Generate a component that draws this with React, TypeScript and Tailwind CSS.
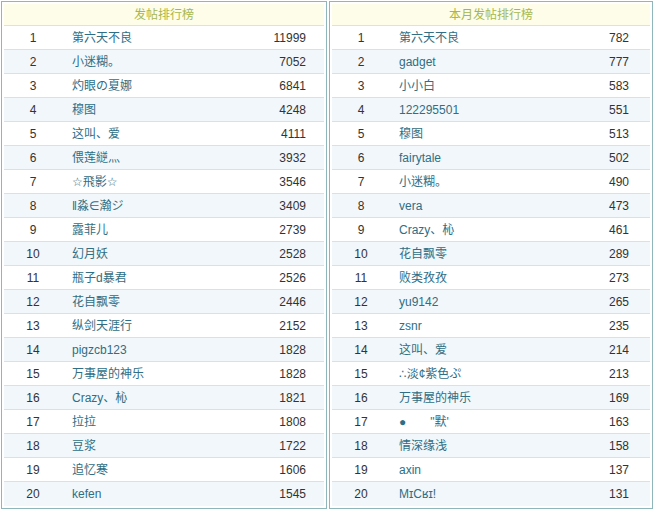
import React from "react";

const left: [string, string][] = [
  ["第六天不良", "11999"],
  ["小迷糊。", "7052"],
  ["灼眼の夏娜", "6841"],
  ["穆图", "4248"],
  ["这叫、爱", "4111"],
  ["偎莲縌灬", "3932"],
  ["☆飛影☆", "3546"],
  ["‖淼∈瀚ジ", "3409"],
  ["露菲儿", "2739"],
  ["幻月妖", "2528"],
  ["瓶子d暴君", "2526"],
  ["花自飘零", "2446"],
  ["纵剑天涯行", "2152"],
  ["pigzcb123", "1828"],
  ["万事屋的神乐", "1828"],
  ["Crazy、杺", "1821"],
  ["拉拉", "1808"],
  ["豆浆", "1722"],
  ["追忆寒", "1606"],
  ["kefen", "1545"],
];

const right: [string, string][] = [
  ["第六天不良", "782"],
  ["gadget", "777"],
  ["小小白", "583"],
  ["122295501", "551"],
  ["穆图", "513"],
  ["fairytale", "502"],
  ["小迷糊。", "490"],
  ["vera", "473"],
  ["Crazy、杺", "461"],
  ["花自飘零", "289"],
  ["败类孜孜", "273"],
  ["yu9142", "265"],
  ["zsnr", "235"],
  ["这叫、爱", "214"],
  ["∴淡¢紫色ぷ", "213"],
  ["万事屋的神乐", "169"],
  ["●　　\"默'", "163"],
  ["情深缘浅", "158"],
  ["axin", "137"],
  ["MɪCʁɪ!", "131"],
];

const font = {
  fontFamily: '"Liberation Sans", "DejaVu Sans", "Noto Sans CJK SC", sans-serif',
};

function Panel({
  title,
  rows,
  width,
  numPad,
  namePad,
}: {
  title: string;
  rows: [string, string][];
  width: string;
  numPad: string;
  namePad: string;
}) {
  return (
    <div className={`${width} border border-[#8fb6ba] p-[2px] bg-white`}>
      <div className="h-[22px] bg-[#fdfdea] border-b border-[#e4e4c4] flex items-center justify-center text-[12px] text-[#a6b84c]">
        {title}
      </div>
      {rows.map(([name, n], i) => (
        <div
          key={i}
          className={`h-[24px] flex items-center text-[12px] ${
            i < rows.length - 1 ? "border-b border-[#d3e3e9]" : ""
          } ${i % 2 === 1 ? "bg-[#f2f7fb]" : "bg-white"}`}
        >
          <div className="w-[58px] text-center text-[#333333]">{i + 1}</div>
          <div className={`flex-1 ${namePad} text-[#2f6e84] whitespace-pre`}>{name}</div>
          <div className={`${numPad} text-[#333333]`}>{n}</div>
        </div>
      ))}
    </div>
  );
}

export default function App() {
  return (
    <div className="w-[653px] h-[509px] bg-white pt-[1px] pl-[1px] flex gap-[2px]" style={font}>
      <Panel title="发帖排行榜" rows={left} width="w-[326px]" numPad="pr-[18px]" namePad="pl-[10px]" />
      <Panel title="本月发帖排行榜" rows={right} width="w-[324px]" numPad="pr-[21px]" namePad="pl-[9px]" />
    </div>
  );
}
